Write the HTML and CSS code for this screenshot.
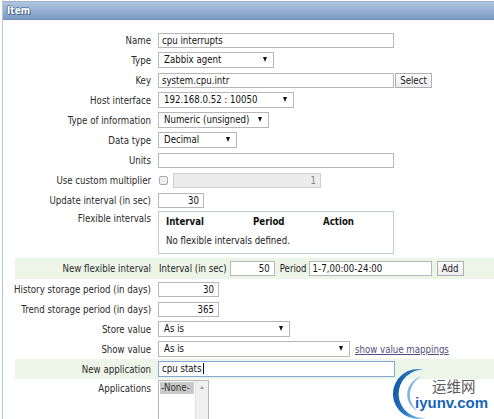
FILE: index.html
```html
<!DOCTYPE html>
<html>
<head>
<meta charset="utf-8">
<title>Item</title>
<link rel="stylesheet" href="styles.css">
</head>
<body>
<div class="panel">
  <div class="header">Item</div>
  <div class="form">
    <div class="row">
      <div class="label">Name</div>
      <div class="field"><div class="input w236">cpu interrupts</div></div>
    </div>
    <div class="row">
      <div class="label">Type</div>
      <div class="field"><div class="select w116">Zabbix agent<span class="arrow"></span></div></div>
    </div>
    <div class="row">
      <div class="label">Key</div>
      <div class="field"><div class="input w236">system.cpu.intr</div><div class="button btn-select">Select</div></div>
    </div>
    <div class="row">
      <div class="label">Host interface</div>
      <div class="field"><div class="select w136">192.168.0.52 : 10050<span class="arrow"></span></div></div>
    </div>
    <div class="row">
      <div class="label">Type of information</div>
      <div class="field"><div class="select w111">Numeric (unsigned)<span class="arrow"></span></div></div>
    </div>
    <div class="row">
      <div class="label">Data type</div>
      <div class="field"><div class="select w79">Decimal<span class="arrow"></span></div></div>
    </div>
    <div class="row">
      <div class="label">Units</div>
      <div class="field"><div class="input w236"></div></div>
    </div>
    <div class="row">
      <div class="label">Use custom multiplier</div>
      <div class="field"><div class="checkbox"></div><div class="input num disabled w148">1</div></div>
    </div>
    <div class="row">
      <div class="label">Update interval (in sec)</div>
      <div class="field"><div class="input num w46">30</div></div>
    </div>
    <div class="row row-flex">
      <div class="label">Flexible intervals</div>
      <div class="field">
        <div class="flexbox">
          <div class="fhead"><span class="c1">Interval</span><span class="c2">Period</span><span class="c3">Action</span></div>
          <div class="fbody">No flexible intervals defined.</div>
        </div>
      </div>
    </div>
    <div class="row hl row-new">
      <div class="label">New flexible interval</div>
      <div class="field">
        <span class="t-int">Interval (in sec)</span>
        <div class="input num w45">50</div>
        <span class="t-per">Period</span>
        <div class="input w123">1-7,00:00-24:00</div>
        <div class="button btn-add">Add</div>
      </div>
    </div>
    <div class="row">
      <div class="label">History storage period (in days)</div>
      <div class="field"><div class="input num w61">30</div></div>
    </div>
    <div class="row">
      <div class="label">Trend storage period (in days)</div>
      <div class="field"><div class="input num w61">365</div></div>
    </div>
    <div class="row">
      <div class="label">Store value</div>
      <div class="field"><div class="select w132">As is<span class="arrow"></span></div></div>
    </div>
    <div class="row">
      <div class="label">Show value</div>
      <div class="field"><div class="select w192">As is<span class="arrow"></span></div><a class="link" href="#">show value mappings</a></div>
    </div>
    <div class="row hl">
      <div class="label">New application</div>
      <div class="field"><div class="input focus w237">cpu stats<span class="caret"></span></div></div>
    </div>
    <div class="row row-apps">
      <div class="label">Applications</div>
      <div class="field">
        <div class="listbox">
          <div class="opt">-None-</div>
          <div class="scroll"><span class="up"></span></div>
        </div>
      </div>
    </div>
  </div>
</div>

<div class="watermark">
  <svg class="wm-logo" width="46" height="54" viewBox="0 0 46 54">
    <defs>
      <linearGradient id="g1" x1="0" y1="0" x2="1" y2="0.3">
        <stop offset="0" stop-color="#0b4f9f"/>
        <stop offset="0.6" stop-color="#2c7cc8"/>
        <stop offset="1" stop-color="#8cc4ee"/>
      </linearGradient>
    </defs>
    <path d="M36.5 2.9 A25 25 0 1 0 38.6 50.5 A24 24 0 1 1 36.5 2.9 Z" fill="url(#g1)"/>
    <path d="M33 10 A18 18 0 0 0 30 44 A20 20 0 0 1 33 10 Z" fill="#7fb6e4"/>
  </svg>
  <div class="wm-cn">运维网</div>
  <div class="wm-en">iyunv.com</div>
</div>
</body>
</html>
```

FILE: styles.css
```css
* { box-sizing: border-box; }

html, body { height: 419px; overflow: hidden; }

body {
  margin: 0;
  width: 494px;
  position: relative;
  background: #ffffff;
  font-family: "DejaVu Sans Condensed", "DejaVu Sans", sans-serif;
  font-stretch: condensed;
  font-size: 9.6px;
  color: #222;
}

.panel {
  margin-left: 2px;
  border-left: 1px solid #b6c6d9;
  height: 419px;
  overflow: hidden;
}

.header {
  margin-top: 1px;
  height: 19px;
  border-top: 1px solid #9bb0ca;
  border-bottom: 1px solid #6f8fb8;
  background: linear-gradient(#b0c5de, #7c9cc5);
  color: #fff;
  font-weight: bold;
  font-size: 10px;
  line-height: 17px;
  padding-left: 4px;
  text-shadow: 1px 1px 0 #3d5b82, -1px 0 0 #5a7aa3, 0 -1px 0 #5a7aa3;
}

.form { padding-top: 10px; }

.row {
  display: flex;
  align-items: center;
  height: 20px;
}

.label {
  flex: none;
  width: 155px;
  padding-right: 7px;
  text-align: right;
  white-space: nowrap;
  color: #2a2a2a;
}

.row.hl {
  margin-left: 12px;
  background: #edf5e9;
}
.row.hl .label { width: 143px; }
.row-new { height: 21px; }

.field {
  display: flex;
  align-items: center;
  white-space: nowrap;
}

.input {
  position: relative;
  height: 15px;
  border: 1px solid #b7b7b7;
  background: #fff;
  padding: 0 3px;
  line-height: 13px;
  white-space: nowrap;
  overflow: hidden;
  color: #111;
}
.input.num { text-align: right; padding-right: 4px; }
.input.disabled { background: #ececec; border-color: #cfcfcf; color: #888; }
.input.focus { border-color: #84a7d2; height: 16px; line-height: 14px; }

.caret {
  display: inline-block;
  width: 1px;
  height: 11px;
  background: #111;
  vertical-align: -2px;
  margin-left: 1px;
}

.w236 { width: 236px; }
.w237 { width: 237px; }
.w148 { width: 148px; }
.w46 { width: 46px; }
.w45 { width: 45px; }
.w61 { width: 61px; }
.w123 { width: 123px; }
.w116 { width: 116px; }
.w136 { width: 136px; }
.w111 { width: 111px; }
.w79 { width: 79px; }
.w132 { width: 132px; }
.w192 { width: 192px; }

.select {
  position: relative;
  height: 16px;
  border: 1px solid #b7b7b7;
  background: #fff;
  padding-left: 5px;
  line-height: 14px;
  color: #111;
}
.select .arrow {
  position: absolute;
  right: 6px;
  top: 4px;
  width: 0;
  height: 0;
  border-left: 2.5px solid transparent;
  border-right: 2.5px solid transparent;
  border-top: 5px solid #111;
}

.button {
  height: 15px;
  border: 1px solid #b0b0b0;
  background: linear-gradient(#fdfdfd, #ececec);
  line-height: 13px;
  text-align: center;
  color: #222;
}
.btn-select { width: 37px; margin-left: 1px; }
.btn-add { width: 27px; margin-left: 5px; }

.checkbox {
  width: 9px;
  height: 9px;
  border: 1px solid #a9a9a9;
  border-radius: 2px;
  background: #efefef;
  margin-left: 1px;
  margin-right: 5px;
}

.row-flex {
  height: 48px;
  align-items: flex-start;
}
.row-flex .label { padding-top: 3px; line-height: 12px; }
.flexbox {
  margin-top: 1px;
  width: 236px;
  height: 43px;
  border: 1px solid #c3cad4;
  padding: 3px 0 0 7px;
}
.fhead {
  display: flex;
  height: 13px;
  line-height: 13px;
  font-weight: bold;
  color: #111;
}
.fhead .c1 { width: 87px; }
.fhead .c2 { width: 70px; }
.fbody { margin-top: 6px; line-height: 13px; color: #222; }

.t-int { margin-left: 1px; margin-right: 3px; }
.t-per { margin-left: 5px; margin-right: 2px; }

.link {
  margin-left: 5px;
  color: #4f4f7c;
  text-decoration: underline;
}

.row-apps {
  height: 40px;
  align-items: flex-start;
}
.row-apps .label { padding-top: 4px; line-height: 12px; }
.listbox {
  position: relative;
  margin-top: 1px;
  width: 51px;
  height: 39px;
  border: 1px solid #b7b7b7;
  border-bottom: none;
  background: #fff;
}
.opt {
  margin: 1px 0 0 1px;
  width: 34px;
  height: 12px;
  line-height: 12px;
  background: #c9c9c9;
  color: #333;
  padding-left: 1px;
}
.scroll {
  position: absolute;
  right: 0;
  top: 0;
  width: 13px;
  height: 100%;
  background: #f0f0f0;
  border-left: 1px solid #e2e2e2;
}
.scroll .up {
  position: absolute;
  left: 4px;
  top: 5px;
  width: 0;
  height: 0;
  border-left: 2px solid transparent;
  border-right: 2px solid transparent;
  border-bottom: 3px solid #9a9a9a;
}

.watermark {
  position: absolute;
  left: 388px;
  top: 367px;
  width: 106px;
  height: 52px;
  overflow: hidden;
}
.wm-logo { position: absolute; left: 0; top: 0; }
.wm-cn {
  position: absolute;
  left: 44px;
  top: 12px;
  height: 14px;
  font-family: "Noto Sans CJK SC", sans-serif;
  font-size: 14.5px;
  line-height: 14px;
  color: #5a5a5a;
  white-space: nowrap;
}
.wm-en {
  position: absolute;
  left: 27px;
  top: 28px;
  height: 15px;
  font-family: "Liberation Sans", Arial, sans-serif;
  font-weight: bold;
  font-size: 15px;
  line-height: 15px;
  color: #1766b5;
  white-space: nowrap;
}
```
